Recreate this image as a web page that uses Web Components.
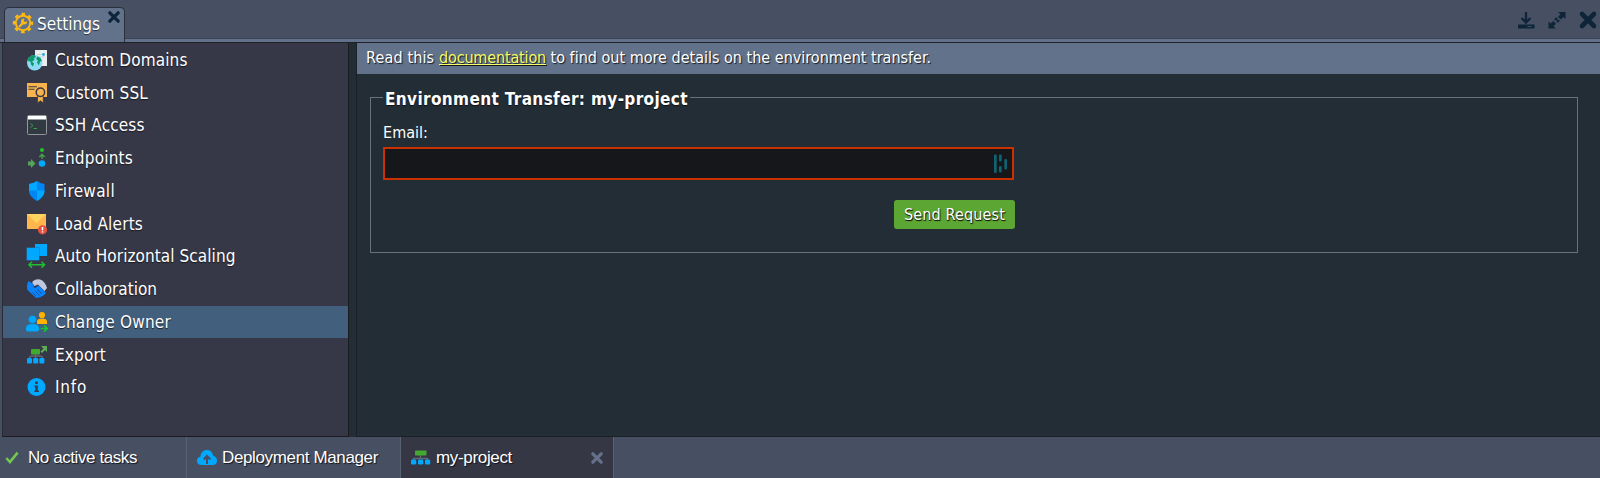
<!DOCTYPE html>
<html lang="en">
<head>
<meta charset="utf-8">
<title>Settings</title>
<style>
html,body{margin:0;height:100%;overflow:hidden;background:#475063}
body{font-family:"DejaVu Sans Condensed","DejaVu Sans",sans-serif;font-stretch:condensed;color:#fff}
</style>
</head>
<body>
<settings-app></settings-app>
<script>
const ICONS = {
gear:`<g fill="none" stroke="#fdb813"><circle cx="10" cy="10" r="7.200" stroke-width="1.900"/><circle cx="10" cy="10" r="9" stroke-width="2.400" stroke-dasharray="3.600 3.470" stroke-dashoffset="1.800"/></g><path d="M6.700 13.300l3.500-3.500" stroke="#fdb813" stroke-width="2.200" stroke-linecap="round"/><path d="M14 8.200a3 3 0 1 1-2.600-2.700L10.700 7.700l1.200 1.200z" fill="#fdb813"/>`,
domains:`<path d="M8 0h12v16H8z" fill="#e9edf0"/><path d="M10.500 4.500h4.500M10.500 7h7" stroke="#c3cdd3"/><circle cx="16.500" cy="4.500" r="1.400" fill="#19b5d8"/><circle cx="7.700" cy="12.700" r="7.700" fill="#8bdcf3"/><path d="M.3 11C1 7.500 4 5 7.500 5l1.500 2-2 1 .5 2-2.500 1.500 2 2-1 3-2-2-.5-3zM10.500 6.500l3 1.500 1.500 3-2 .5-1 4-2-3 1-2-2-1.500z" fill="#0b996b"/>`,
ssl:`<path d="M0 0h20v14H0z" fill="#f8b44c"/><path d="M1.500 3.700h8.500M1.500 6.200h6" stroke="#373847" stroke-width="1.100"/><path d="M10.600 13h5.600v7l-2.800-2.300-2.800 2.300z" fill="#f8b44c" stroke="#373847" stroke-width=".7"/><circle cx="13.400" cy="9.300" r="4.200" fill="#f8b44c" stroke="#373847" stroke-width="1.500"/>`,
ssh:`<rect x=".5" y=".5" width="19" height="19" rx="1" fill="#313a40" stroke="#929599"/><path d="M1 1h18v3.500H1z" fill="#fff"/><path d="M3.500 8.500L6 10.500l-2.500 2M6.500 13.500h3.500" fill="none" stroke="#31a34b"/>`,
endpoints:`<circle cx="15" cy="2" r="2" fill="#20c52b"/><path d="M15 11V7M12.300 9L15 6.300 17.700 9" fill="none" stroke="#43a047" stroke-width="1.500"/><path d="M1 13.500h3V11l4.500 4.500L4 20v-2.500H1z" fill="#55a455"/><circle cx="15" cy="15.500" r="3.300" fill="#00a8ff"/>`,
firewall:`<path d="M2 3q5-.5 8-3 3 2.500 7.500 3v7q0 5.500-7.500 10Q2 15.500 2 10z" fill="#0085f5"/><path d="M10 0Q7 2.500 2 3v6.500h8zM10 9.500h7.500V10q0 5.500-7.500 10z" fill="#00a9ff"/>`,
alerts:`<path d="M0 0h19v15H0z" fill="#ffb74d"/><path d="M0 0h19L9.500 9z" fill="#ffd45e"/><circle cx="15.500" cy="15.800" r="4.600" fill="#e25241"/><path d="M15.500 13v3.300M15.500 17.300v1.300" stroke="#fff" stroke-width="1.500"/>`,
scaling:`<path d="M8 -2h12v12H8z" fill="#00a8ff"/><path d="M-.5 1.500h13v13h-13z" fill="#1577b9"/><path d="M0 2h12v12H0z" fill="#00a8ff"/><path d="M2 18.800h15M5 15.800l-3 3 3 3M14.500 15.800l3 3-3 3" fill="none" stroke="#20bd32" stroke-width="1.600"/>`,
collab:`<path d="M5.500 2.500Q9-.5 13 .5q5 1.500 7 8.500l-2.500 3L11 5.500 7.500 7 5.500 5z" fill="#c1c7de"/><path d="M1.500 2Q-1.500 8 1 11.500L8 18q2.500 2 3.500.3 2 .9 2.800-1 2 .3 2.500-1.600 2.500-.2 1.500-2.700L11.500 6.500 8.500 9Q5.500 8.500 7 5.500z" fill="#0b83f8"/><path d="M5.500 13.500L9 17M8 12l4.500 4.500M10.500 10.500L15 15" stroke="#174b83" stroke-width=".9"/>`,
owner:`<circle cx="15" cy="3" r="3.100" fill="#ffb300"/><path d="M10 12V9.500q0-3 5-3t5 3V12z" fill="#ffb300"/><circle cx="5.500" cy="7.500" r="4" fill="#00a8ff" stroke="#425f7d" stroke-width=".5"/><path d="M-1 17.500V16q0-4 6.500-4t6.500 4v1.500q0 2-2 2H1q-2 0-2-2z" fill="#00a8ff"/><path d="M13.500 16.500h6.500M17 13.300l3.300 3.200-3.300 3.200" fill="none" stroke="#13c932" stroke-width="1.700"/>`,
export:`<path d="M8.500 9v2M2.500 13q0-2 3-2h7q3 0 3 2M8.500 10v4" fill="none" stroke="#626773" stroke-width="1.300"/><rect x="4" y="4" width="9" height="5.500" rx=".8" fill="#43a82f"/><path d="M14 1h6v6l-2-2-3 3-1.500-1.500 3-3z" fill="#5cad53"/><g fill="#00a8ff"><rect y="13" width="5" height="5.500" rx="1.200"/><rect x="6.200" y="13" width="5" height="5.500" rx="1.200"/><rect x="12.400" y="13" width="5" height="5.500" rx="1.200"/></g>`,
info:`<circle cx="9.500" cy="10" r="9" fill="#00a8ff"/><path d="M8.200 4.500h2.600V7H8.200zM7.400 8.500h3.400v5.300H12V15H7.400v-1.200h.9V9.700h-.9z" fill="#353747"/>`,
check:`<path d="M1.500 10l4 4.500L14 4" fill="none" stroke="#72c850" stroke-width="2.800"/>`,
cloud:`<path d="M5 17q-5 0-5-4.200Q0 9.500 3.500 8.500 4 2 10 2q5 0 6 5.500 4 1.500 4 5 0 4.500-4.500 4.500z" fill="#00a8ff"/><path d="M10 16V9M6.700 11.500L10 8l3.300 3.500" fill="none" stroke="#475063" stroke-width="2"/>`,
topology:`<path d="M9.500 7v4M2.500 13v-2.500h14V13" fill="none" stroke="#626773" stroke-width="1.300"/><rect x="4" y="2.500" width="11.500" height="5" rx=".8" fill="#43a82f"/><g fill="#00a8ff"><rect y="11.500" width="5.200" height="5" rx="1.300"/><rect x="7" y="11.500" width="5.200" height="5" rx="1.300"/><rect x="14" y="11.500" width="5.200" height="5" rx="1.300"/></g>`,
close:`<path d="M4 4l12 12M16 4L4 16" stroke="currentColor" stroke-width="4.600" stroke-linecap="round"/>`,
download:`<path d="M10 2v9M5.500 8L10 12.500 14.500 8" fill="none" stroke="currentColor" stroke-width="2.300"/><path d="M2 14.500h16.500v4H2z" fill="currentColor"/><path d="M11.500 16.500h4" stroke="#475063"/>`,
expand:`<path d="M11 2h7.500v7l-2.200-2-2.600 2.600-2.700-2.700L13.500 4.300zM9 18.500H1.500v-7l2.200 2L6.300 11l2.700 2.700-2.600 2.500z" fill="currentColor"/><path d="M8 10l2-2M10 12l2-2" stroke="currentColor" stroke-width="2.400"/>`,
dash:`<g fill="#0f6373"><rect x="3" y=".5" width="2.700" height="18.500" rx="1"/><rect x="8" y=".5" width="2.700" height="7" rx="1"/><rect x="8" y="12" width="2.700" height="6.500" rx="1"/><rect x="13.300" y="5" width="2.700" height="10.500" rx="1"/></g>`
};
class BaseElement extends HTMLElement{
  constructor(){super();this.attachShadow({mode:"open"});}
  connectedCallback(){this.shadowRoot.innerHTML=this.render();this.ready&&this.ready();}
}
customElements.define("ui-icon",class extends BaseElement{
  render(){const s=this.getAttribute("size")||20;return `<style>:host{display:block;flex:none;width:${s}px;height:${s}px}svg{display:block;overflow:visible}</style><svg width="${s}" height="${s}" viewBox="0 0 20 20">${ICONS[this.getAttribute("name")]}</svg>`;}
});
/* A single-line label whose tracking is adjusted to a given width. */
customElements.define("fit-text",class extends BaseElement{
  render(){return `<style>:host{display:inline-block;white-space:pre}</style><slot></slot>`;}
  ready(){const w=+this.getAttribute("w");if(!w)return;const n=this.textContent.length;this.style.letterSpacing=((w-this.getBoundingClientRect().width)/n).toFixed(3)+"px";}
});
customElements.define("menu-item",class extends BaseElement{
  render(){return `<style>:host{display:flex;align-items:center;height:32.75px;padding-left:24px;gap:8px;font-size:17px;line-height:24px;text-shadow:0 1px 1px #17181f}
  :host([active]){background:#425f7d}</style><ui-icon name="${this.getAttribute("icon")}"></ui-icon><fit-text w="${this.getAttribute("w")}">${this.getAttribute("label")}</fit-text>`;}
});
customElements.define("side-menu",class extends BaseElement{
  render(){return `<style>:host{display:block;box-sizing:border-box;width:347px;border:1px solid #1b1c20;border-top:0;border-left-color:#292b36;background:#373847;padding-top:.5px}</style><slot></slot>`;}
});
customElements.define("panel-header",class extends BaseElement{
  render(){return `<style>:host{display:flex;justify-content:space-between;box-sizing:border-box;height:43px;border-bottom:1px solid #202128;color:#0e2539;
  background:linear-gradient(#475063 0 37.500px,#3b4354 38px 39px,#62728b 39px)}
  .tab{display:flex;box-sizing:border-box;width:121px;height:35px;margin:7px 0 0 4px;padding-left:8px;border:1px solid #2c303c;border-bottom:0;border-radius:5px 5px 0 0;background:#62728b;font-size:17px;line-height:31px}
  .tab .t{color:#fff;margin:1px 0 0 4px;text-shadow:0 1px 1px #27303e}.tab .g{margin-top:5px}.tab .c{margin:2px 0 0 7px}
  .tools{display:flex;gap:11px;margin:10px 2px 0 0}</style>
  <div class="tab"><ui-icon class="g" name="gear"></ui-icon><fit-text class="t" w="63">Settings</fit-text><ui-icon class="c" name="close" size="14"></ui-icon></div>
  <div class="tools"><ui-icon name="download"></ui-icon><ui-icon name="expand"></ui-icon><ui-icon name="close"></ui-icon></div>`;}
});
customElements.define("info-banner",class extends BaseElement{
  render(){return `<style>:host{display:flex;height:31px;background:#62728b;padding-left:9px;font-size:16px;line-height:30px;text-shadow:1px 1px 1px #111820}.l{color:#f6fc62;text-decoration:underline;text-decoration-thickness:1px;text-underline-offset:1px}</style>
  <fit-text w="73">Read this </fit-text><fit-text class="l" w="107">documentation</fit-text><fit-text w="385"> to find out more details on the environment transfer.</fit-text>`;}
});
customElements.define("transfer-form",class extends BaseElement{
  render(){return `<style>:host{display:block;padding:10px 22px 0 13px}
  fieldset{margin:0;box-sizing:border-box;height:169px;border:1px solid #68727d;padding:0 12px;min-width:0}
  legend{padding:4px 2px 0 2px;font-size:17px;line-height:22px;font-weight:bold;text-shadow:0 1px 1px #111}
  label{display:block;font-size:16px;line-height:20px;margin:13px 0 4px}
  .box{display:flex;align-items:center;justify-content:flex-end;box-sizing:border-box;width:631px;height:33px;border:2px solid #c93200;background:#16171b;padding-right:1px}
  .act{display:flex;justify-content:flex-end;width:632px;margin-top:20px}
  button{width:121px;height:29px;border:0;border-radius:3px;padding:0;background:#5ca634;color:#fff;font:inherit;font-size:16px;line-height:29px;text-shadow:1px 1px 1px #142008,0 1px 0 #213b13}</style>
  <fieldset><legend><fit-text w="303">Environment Transfer: my-project</fit-text></legend>
  <label><fit-text w="45">Email:</fit-text></label><div class="box"><ui-icon name="dash"></ui-icon></div>
  <div class="act"><button><fit-text w="101">Send Request</fit-text></button></div></fieldset>`;}
});
customElements.define("task-bar",class extends BaseElement{
  render(){return `<style>:host{display:flex;height:41px;background:#475063;font:17px/41px "Liberation Sans",Arial,sans-serif;text-shadow:1px 1px 1px #10131a}
  div{display:flex;align-items:center;box-sizing:border-box;border-right:1px solid #596273}.a{width:187px;padding-left:5px;gap:5px}.b{width:214px;padding-left:10px;gap:5px}.c{width:213px;padding-left:10px;gap:5px;background:#353745}
  .c .x{margin-left:auto;margin-right:9px;color:#65718a}</style>
  <div class="a"><ui-icon name="check" size="18"></ui-icon><fit-text w="109">No active tasks</fit-text></div>
  <div class="b"><ui-icon name="cloud"></ui-icon><fit-text w="156">Deployment Manager</fit-text></div>
  <div class="c"><ui-icon name="topology"></ui-icon><fit-text w="76">my-project</fit-text><ui-icon class="x" name="close" size="14"></ui-icon></div>`;}
});
customElements.define("settings-app",class extends BaseElement{
  render(){const items=[["domains","Custom Domains",132.5],["ssl","Custom SSL",93],["ssh","SSH Access",89.5],["endpoints","Endpoints",78],["firewall","Firewall",60],["alerts","Load Alerts",88],["scaling","Auto Horizontal Scaling",180.5],["collab","Collaboration",102],["owner","Change Owner",116],["export","Export",51],["info","Info",32]];
  return `<style>:host{display:grid;grid-template-rows:43px 394px 41px;height:478px;width:1600px}
  .body{display:flex;background:#475063;padding-left:2px}.gap{width:7px;background:#232d36}main{flex:1;border-left:1px solid #1b2026;border-bottom:1px solid #1b2026;background:#232d36;min-width:0}</style>
  <panel-header></panel-header><div class="body"><side-menu>${items.map(([i,l,w])=>`<menu-item icon="${i}" label="${l}" w="${w}"${i==="owner"?" active":""}></menu-item>`).join("")}</side-menu><div class="gap"></div><main><info-banner></info-banner><transfer-form></transfer-form></main></div><task-bar></task-bar>`;}
});
</script>
</body>
</html>
